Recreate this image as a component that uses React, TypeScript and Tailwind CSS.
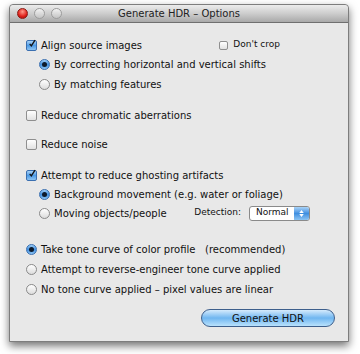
import { useState } from 'react';

type Tick = { checked: boolean; onClick: () => void };

function Checkbox({ checked, onClick, small }: Tick & { small?: boolean }) {
  const size = small ? 'w-[9px] h-[9px]' : 'w-[11px] h-[11px]';
  return (
    <button
      onClick={onClick}
      className={`${size} shrink-0 rounded-[2px] border flex items-center justify-center ${
        checked
          ? 'border-[#3a6fb0] bg-gradient-to-b from-[#a9d3f7] via-[#4d9be6] to-[#8cc4f3]'
          : 'border-[#8f8f8f] bg-gradient-to-b from-[#ffffff] to-[#e2e2e2]'
      }`}
    >
      {checked && (
        <svg viewBox="0 0 12 12" className="w-[13px] h-[13px] -mt-[3px] ml-[1px]">
          <path d="M2.5 6.5 L5 9.5 L10.5 1" fill="none" stroke="#111" strokeWidth="2" />
        </svg>
      )}
    </button>
  );
}

function Radio({ checked, onClick }: Tick) {
  return (
    <button
      onClick={onClick}
      className={`w-[11px] h-[11px] shrink-0 rounded-full border flex items-center justify-center ${
        checked
          ? 'border-[#3a6fb0] bg-gradient-to-b from-[#9dcdf6] via-[#3f8fe0] to-[#8cc4f3]'
          : 'border-[#8a8a8a] bg-gradient-to-b from-[#ffffff] to-[#dcdcdc]'
      }`}
    >
      {checked && <span className="w-[5px] h-[5px] rounded-full bg-[#0d1a2b]" />}
    </button>
  );
}

export default function App() {
  const [align, setAlign] = useState(true);
  const [noCrop, setNoCrop] = useState(false);
  const [alignMode, setAlignMode] = useState(0);
  const [chroma, setChroma] = useState(false);
  const [noise, setNoise] = useState(false);
  const [ghost, setGhost] = useState(true);
  const [ghostMode, setGhostMode] = useState(0);
  const [tone, setTone] = useState(0);

  return (
    <div
      className="w-[360px] h-[354px] bg-white pl-[9px] pt-[4px] text-[#111] text-[10px]"
      style={{ fontFamily: '"DejaVu Sans", "Liberation Sans", sans-serif' }}
    >
      <div className="w-[340px] h-[338px] bg-[#e8e8e8] border border-[#7d7d7d] rounded-t-[4px] shadow-[0_4px_9px_rgba(0,0,0,0.55)] flex flex-col">
        <div className="h-[18px] rounded-t-[4px] bg-gradient-to-b from-[#ececec] via-[#cdcdcd] to-[#a9a9a9] border-b border-[#6f6f6f] flex items-center relative">
          <div className="flex gap-[6px] pl-[7px]">
            <span className="w-[11px] h-[11px] rounded-full bg-[radial-gradient(circle_at_50%_30%,#ff9a8a,#e0201a_60%,#9a0d08)] border border-[#8a1a14]" />
            <span className="w-[11px] h-[11px] rounded-full bg-gradient-to-b from-[#f2f2f2] to-[#c4c4c4] border border-[#9c9c9c]" />
            <span className="w-[11px] h-[11px] rounded-full bg-gradient-to-b from-[#f2f2f2] to-[#c4c4c4] border border-[#9c9c9c]" />
          </div>
          <div className="absolute inset-0 flex items-center justify-center text-[10px] text-[#222]">
            Generate HDR – Options
          </div>
        </div>

        <div className="flex flex-col pl-[16px] pt-[12px]">
          <div className="h-[20px] flex items-center">
            <Checkbox checked={align} onClick={() => setAlign(!align)} />
            <span className="ml-[4px]">Align source images</span>
            <div className="ml-auto mr-[68px] flex items-center text-[9px]">
              <Checkbox small checked={noCrop} onClick={() => setNoCrop(!noCrop)} />
              <span className="ml-[5px]">Don't crop</span>
            </div>
          </div>
          <div className="h-[20px] -mt-[1px] flex items-center pl-[13px]">
            <Radio checked={alignMode === 0} onClick={() => setAlignMode(0)} />
            <span className="ml-[4px]">By correcting horizontal and vertical shifts</span>
          </div>
          <div className="h-[20px] flex items-center pl-[13px]">
            <Radio checked={alignMode === 1} onClick={() => setAlignMode(1)} />
            <span className="ml-[4px]">By matching features</span>
          </div>

          <div className="h-[20px] mt-[11px] flex items-center">
            <Checkbox checked={chroma} onClick={() => setChroma(!chroma)} />
            <span className="ml-[4px]">Reduce chromatic aberrations</span>
          </div>

          <div className="h-[20px] mt-[9px] flex items-center">
            <Checkbox checked={noise} onClick={() => setNoise(!noise)} />
            <span className="ml-[4px]">Reduce noise</span>
          </div>

          <div className="h-[20px] mt-[11px] flex items-center">
            <Checkbox checked={ghost} onClick={() => setGhost(!ghost)} />
            <span className="ml-[4px]">Attempt to reduce ghosting artifacts</span>
          </div>
          <div className="h-[20px] -mt-[1px] flex items-center pl-[13px]">
            <Radio checked={ghostMode === 0} onClick={() => setGhostMode(0)} />
            <span className="ml-[4px]">Background movement (e.g. water or foliage)</span>
          </div>
          <div className="h-[20px] -mt-[1px] flex items-center pl-[13px]">
            <Radio checked={ghostMode === 1} onClick={() => setGhostMode(1)} />
            <span className="ml-[4px]">Moving objects/people</span>
            <span className="ml-auto text-[9px]">Detection:</span>
            <div className="ml-[8px] mr-[38px] w-[61px] h-[15px] rounded-[3px] border border-[#8a8a8a] bg-white flex items-center text-[9px] overflow-hidden">
              <span className="pl-[6px] flex-1">Normal</span>
              <span className="w-[15px] h-full bg-gradient-to-b from-[#a9d3f7] via-[#3f8fe0] to-[#8cc4f3] flex flex-col items-center justify-center gap-[1px]">
                <svg viewBox="0 0 6 4" className="w-[5px] h-[3px]"><path d="M0 4 L3 0 L6 4 Z" fill="#fff" /></svg>
                <svg viewBox="0 0 6 4" className="w-[5px] h-[3px]"><path d="M0 0 L3 4 L6 0 Z" fill="#fff" /></svg>
              </span>
            </div>
          </div>

          <div className="h-[20px] mt-[16px] flex items-center">
            <Radio checked={tone === 0} onClick={() => setTone(0)} />
            <span className="ml-[4px]">Take tone curve of color profile&nbsp;&nbsp;&nbsp;(recommended)</span>
          </div>
          <div className="h-[20px] flex items-center">
            <Radio checked={tone === 1} onClick={() => setTone(1)} />
            <span className="ml-[4px]">Attempt to reverse-engineer tone curve applied</span>
          </div>
          <div className="h-[20px] flex items-center">
            <Radio checked={tone === 2} onClick={() => setTone(2)} />
            <span className="ml-[4px]">No tone curve applied – pixel values are linear</span>
          </div>

          <div className="flex justify-end mt-[10px] pr-[13px]">
            <button className="w-[134px] h-[18px] rounded-full border border-[#3d5f8c] bg-gradient-to-b from-[#d5ebfc] via-[#6fb6f0] to-[#b9e2fc] text-[10px] text-[#111]">
              Generate HDR
            </button>
          </div>
        </div>
      </div>
    </div>
  );
}
